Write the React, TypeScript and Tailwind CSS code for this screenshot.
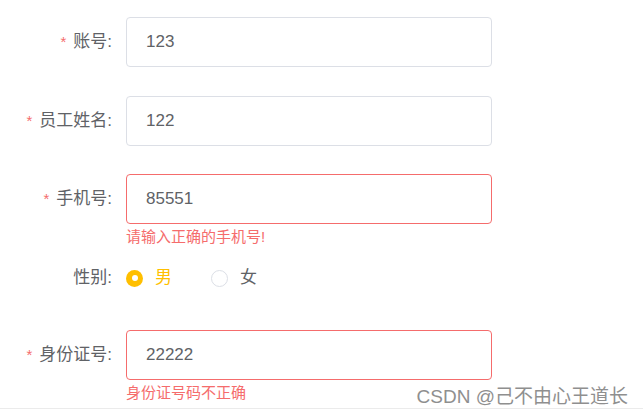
const font = { fontFamily: '"Liberation Sans", "Noto Sans CJK SC", sans-serif' };

const Label = ({ text, required }: { text: string; required?: boolean }) => (
  <div className="w-[126px] shrink-0 pr-[14px] flex items-center justify-end text-[17px] text-[#606266]">
    {required && <span className="text-[#f56c6c] mr-[7px] text-[15px]">*</span>}
    <span>{text}:</span>
  </div>
);

const Field = ({ value, error }: { value: string; error?: boolean }) => (
  <div
    className={`w-[366px] h-[50px] rounded-[4px] border bg-white flex items-center pl-[19px] text-[17px] text-[#606266] ${
      error ? "border-[#f56c6c]" : "border-[#dcdfe6]"
    }`}
  >
    {value}
  </div>
);

const ErrorText = ({ text }: { text: string }) => (
  <div className="ml-[126px] text-[15px] leading-[18px] text-[#f56c6c]">{text}</div>
);

export default function App() {
  return (
    <div className="w-[643px] h-[416px] bg-white overflow-hidden relative" style={font}>
      <div className="pt-[17px]">
        {/* 账号 */}
        <div className="flex mb-[29px]">
          <Label text="账号" required />
          <Field value="123" />
        </div>

        {/* 员工姓名 */}
        <div className="flex mb-[28px]">
          <Label text="员工姓名" required />
          <Field value="122" />
        </div>

        {/* 手机号 */}
        <div className="flex">
          <Label text="手机号" required />
          <Field value="85551" error />
        </div>
        <div className="mt-[4px]">
          <ErrorText text="请输入正确的手机号!" />
        </div>

        {/* 性别 */}
        <div className="flex h-[40px] mt-[12px]">
          <Label text="性别" />
          <div className="flex items-center">
            <div className="flex items-center w-[85px]">
              <span className="w-[17px] h-[17px] rounded-full bg-[#ffbf00] flex items-center justify-center">
                <span className="w-[6px] h-[6px] rounded-full bg-white" />
              </span>
              <span className="ml-[12px] text-[17px] text-[#ffbf00]">男</span>
            </div>
            <div className="flex items-center">
              <span className="w-[17px] h-[17px] rounded-full border border-[#dcdfe6] bg-white" />
              <span className="ml-[12px] text-[17px] text-[#606266]">女</span>
            </div>
          </div>
        </div>

        {/* 身份证号 */}
        <div className="flex mt-[32px]">
          <Label text="身份证号" required />
          <Field value="22222" error />
        </div>
        <div className="mt-[4px]">
          <ErrorText text="身份证号码不正确" />
        </div>
      </div>
      <div className="border-t border-[#ebebeb] mt-[6px]" />

      {/* watermark */}
      <span className="absolute right-[15px] bottom-[9px] text-[19px] leading-[20px] text-[#8f8f8f]">
        CSDN @己不由心王道长
      </span>
    </div>
  );
}
